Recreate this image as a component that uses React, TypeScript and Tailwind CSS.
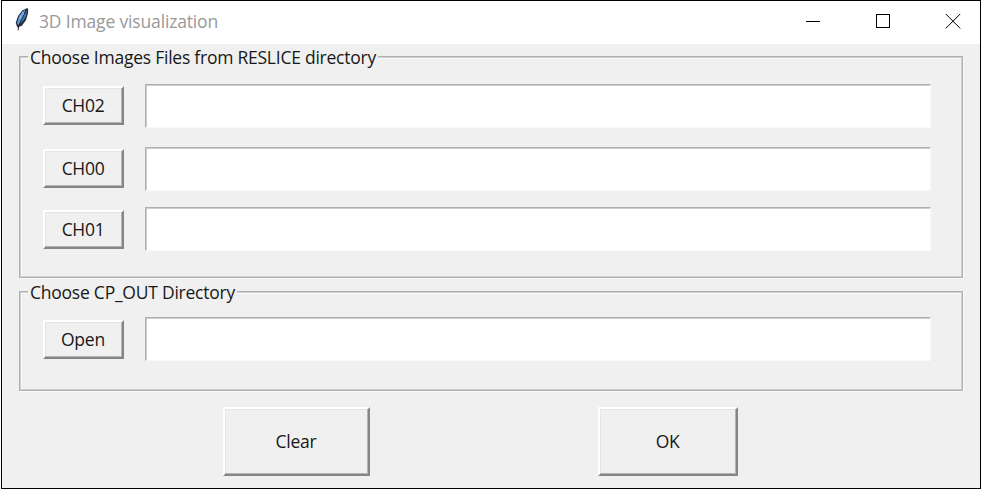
import React from 'react';

const font = "font-['Open_Sans','Noto_Sans',sans-serif]";

function TkButton({ label, className, textClass }: { label: string; className: string; textClass: string }) {
  return (
    <button
      type="button"
      className={`flex shrink-0 items-center justify-center border-2 border-t-white border-r-[#858585] border-b-[#858585] border-l-white bg-[#f0f0f0] shadow-[inset_-1px_-1px_0_#b4b4b4,inset_1px_1px_0_#e5e5e5] ${className}`}
    >
      <span className={`-mt-0.5 whitespace-nowrap text-[17.5px] leading-6 text-[#181818] ${textClass}`}>{label}</span>
    </button>
  );
}

function Row({ label, rowClass, buttonClass, textClass }: { label: string; rowClass: string; buttonClass: string; textClass: string }) {
  return (
    <div className={`flex items-start ${rowClass}`}>
      <TkButton label={label} className={`h-[39px] w-[81px] ${buttonClass}`} textClass={textClass} />
      <input
        type="text"
        aria-label={label}
        className="ml-[21px] h-[44px] w-[786px] border border-t-[#b0b0b0] border-r-[#f9f9f9] border-b-[#f9f9f9] border-l-[#b0b0b0] bg-white px-2 shadow-[inset_1px_1px_0_#cccccc] outline-none"
      />
    </div>
  );
}

function Group({ title, className, titleClass, children }: { title: string; className: string; titleClass: string; children: React.ReactNode }) {
  return (
    <section
      className={`ml-[17px] flex w-[944px] flex-col items-start border border-[#b0b0b0] p-px shadow-[inset_0_0_0_1px_#d0d0d0,inset_2px_2px_0_#fafafa,1px_1px_0_#fafafa] ${className}`}
    >
      <h2 className={`-mt-[13px] ml-[7px] h-6 whitespace-nowrap bg-[#f0f0f0] pl-[2px] text-[17.5px] leading-6 text-[#181818] ${titleClass}`}>
        {title}
      </h2>
      {children}
    </section>
  );
}

function Feather() {
  return (
    <svg width="16" height="26" viewBox="0 0 16 26" className="shrink-0">
      <path d="M13.2 1 8.2 3.6 4 9 1.7 15.8l1.6 4.6 4.6-1.7 4-5.4 2.1-6.7.2-4.6z" fill="#2b323b" />
      <path d="M12.4 2 8.3 4.8 4.6 10.4l-1.5 6 1.6 1.6L9.8 9.5z" fill="#5c9ce0" />
      <path d="m12.8 3.2-.8 5.5-2.4 4.3-4.4 4.4 4.6-7.9z" fill="#4580c2" />
      <path d="M12.5 2 9 9.7 4.7 18.5l-.5 4.8" fill="none" stroke="#15191e" strokeWidth="0.9" />
      <path d="m6.2 8 .6 4M8.6 5.2l.6 2.8" stroke="#a7d0ff" strokeWidth=".8" />
    </svg>
  );
}

export default function App() {
  return (
    <div className={`h-[489px] w-[981px] overflow-hidden bg-white pl-px ${font}`}>
      <main className="flex h-full w-full flex-col border border-black bg-[#f0f0f0]">
        <header className="flex h-[43px] shrink-0 items-center bg-white">
          <div className="-mt-[5px] ml-3 flex"><Feather /></div>
          <h1 className="-mt-[3px] ml-[9px] w-[190px] whitespace-nowrap text-[17.5px] leading-6 tracking-[-0.16px] text-[#999]">3D Image visualization</h1>
          <div className="-mt-[3px] mr-[19px] ml-auto flex items-center gap-[54px]">
            <svg width="16" height="16" viewBox="0 0 16 16" shapeRendering="crispEdges"><path d="M1 8.5h14" stroke="#000" /></svg>
            <svg width="16" height="16" viewBox="0 0 16 16" shapeRendering="crispEdges"><path d="M1.5 1.5h13v13h-13z" fill="none" stroke="#000" /></svg>
            <svg width="16" height="16" viewBox="0 0 16 16"><path d="m.8 1 14.4 14.4m0-14.4L.8 15.4" stroke="#000" /></svg>
          </div>
        </header>

        <Group title="Choose Images Files from RESLICE directory" className="mt-[12px] h-[222px] shrink-0" titleClass="w-[350px] tracking-[-0.24px]">
          <Row label="CH02" rowClass="mt-[15px] ml-[22px]" buttonClass="mt-[2px]" textClass="-ml-px tracking-[-0.3px]" />
          <Row label="CH00" rowClass="mt-[19px] ml-[22px]" buttonClass="mt-[2px]" textClass="-ml-px tracking-[-0.3px]" />
          <Row label="CH01" rowClass="mt-[16px] ml-[22px]" buttonClass="mt-[3px]" textClass="-ml-px tracking-[-0.3px]" />
        </Group>

        <Group title="Choose CP_OUT Directory" className="mt-[13px] h-[100px] shrink-0" titleClass="w-[209px] tracking-[-0.24px]">
          <Row label="Open" rowClass="mt-[13px] ml-[22px]" buttonClass="mt-[3px]" textClass="-ml-px tracking-[-0.2px]" />
        </Group>

        <footer className="mt-[16px] ml-[221px] flex gap-[228px]">
          <TkButton label="Clear" className="h-[69px] w-[147px]" textClass="-ml-px tracking-[-0.2px]" />
          <TkButton label="OK" className="h-[69px] w-[140px]" textClass="-ml-px tracking-[-0.5px]" />
        </footer>
      </main>
    </div>
  );
}
